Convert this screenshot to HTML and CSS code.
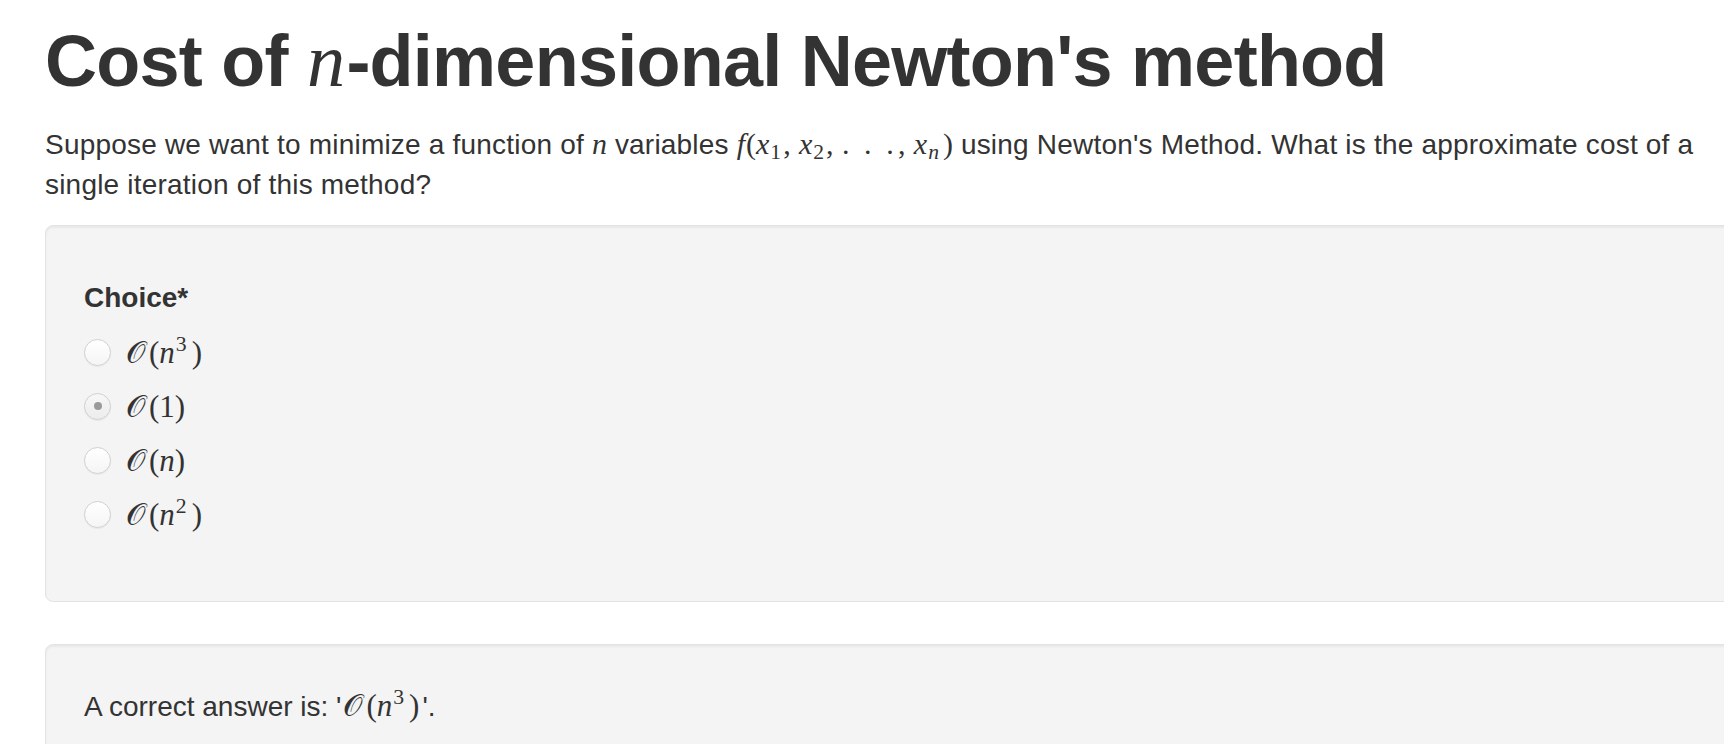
FILE: index.html
```html
<!DOCTYPE html>
<html lang="en">
<head>
<meta charset="utf-8">
<title>Cost of n-dimensional Newton's method</title>
<link rel="stylesheet" href="styles.css">
</head>
<body>
<div class="container">
  <h1 class="title">Cost of <span class="mi mi-title">n</span>-dimensional Newton's method</h1>
  <p class="question">Suppose we want to minimize a function of <span class="math"><span class="mi">n</span></span> variables <span class="math fx"><span class="mi mi-f">f</span><span class="mo">(</span><span class="mi">x</span><span class="sub">1</span><span class="punct">,</span><span class="mi">x</span><span class="sub">2</span><span class="punct">,</span><span class="dots">. . .</span><span class="punct">,</span><span class="mi">x</span><span class="sub sub-i">n</span><span class="mo mo-close">)</span></span> using Newton's Method. What is the approximate cost of a single iteration of this method?</p>

  <div class="well well-choice">
    <div class="field-label">Choice*</div>
    <div class="options">
      <div class="option"><span class="radio"></span><span class="math big"><span class="cal">𝒪</span><span class="mo">(</span><span class="mi">n</span><span class="sup">3</span><span class="mo">)</span></span></div>
      <div class="option"><span class="radio checked"><span class="dot"></span></span><span class="math big"><span class="cal">𝒪</span><span class="mo">(1)</span></span></div>
      <div class="option"><span class="radio"></span><span class="math big"><span class="cal">𝒪</span><span class="mo">(</span><span class="mi">n</span><span class="mo">)</span></span></div>
      <div class="option"><span class="radio"></span><span class="math big"><span class="cal">𝒪</span><span class="mo">(</span><span class="mi">n</span><span class="sup">2</span><span class="mo">)</span></span></div>
    </div>
  </div>

  <div class="well well-answer">
    <p class="answer">A correct answer is: '<span class="math big answer-math"><span class="cal">𝒪</span><span class="mo">(</span><span class="mi">n</span><span class="sup">3</span><span class="mo">)</span></span>'.</p>
  </div>
</div>
</body>
</html>
```

FILE: styles.css
```css
html {
  overflow-x: hidden;
}

body {
  margin: 0;
  background: #ffffff;
  color: #333333;
  font-family: "Liberation Sans", Arial, Helvetica, sans-serif;
  font-size: 28px;
  line-height: 40px;
}

.container {
  width: 1700px;
  padding-left: 45px;
}

.title {
  margin: 21px 0 23px;
  font-size: 72px;
  line-height: 80px;
  font-weight: 700;
  letter-spacing: -0.75px;
  color: #333333;
}

.question {
  margin: 0 0 20px;
  letter-spacing: 0.2px;
}

.math {
  font-family: "Liberation Serif", "DejaVu Serif", serif;
  font-size: 1.07em;
  letter-spacing: 0;
  white-space: nowrap;
}

.mi {
  font-style: italic;
  font-family: "Liberation Serif", "DejaVu Serif", serif;
}

.mi-title {
  font-weight: 400;
  font-size: 1.06em;
  padding-right: 2px;
}

.mi-f {
  margin-right: 1px;
}

.mo {
  font-style: normal;
}

.mo-close {
  margin-left: 2px;
}

.sub {
  font-size: 0.72em;
  vertical-align: -0.25em;
  line-height: 0;
  margin-left: 1px;
  margin-right: 2px;
}

.sub-i {
  font-style: italic;
}

.sup {
  font-size: 0.7em;
  vertical-align: 0.55em;
  line-height: 0;
  margin-left: 1px;
  margin-right: 5px;
}

.punct {
  margin-right: 0.28em;
}

.dots {
  letter-spacing: 0.12em;
  margin-right: 0.02em;
}

.well {
  background: #f4f4f4;
  border: 1px solid #e3e3e3;
  border-radius: 8px;
  box-shadow: inset 0 2px 2px rgba(0, 0, 0, 0.05);
}

.well-choice {
  padding: 52px 38px 60px;
  margin-bottom: 42px;
}

.field-label {
  font-weight: 700;
  margin-bottom: 7px;
}

.options {
  display: flex;
  flex-direction: column;
}

.option {
  display: flex;
  align-items: center;
  gap: 15px;
  height: 54px;
}

.radio {
  flex: none;
  display: flex;
  align-items: center;
  justify-content: center;
  box-sizing: border-box;
  width: 27px;
  height: 27px;
  border-radius: 50%;
  border: 1px solid #d0d0d0;
  background: linear-gradient(#ffffff, #f5f5f5);
  box-shadow: 0 1px 1px rgba(0, 0, 0, 0.05);
}

.radio.checked {
  background: linear-gradient(#f7f7f7, #ececec);
}

.dot {
  width: 8px;
  height: 8px;
  border-radius: 50%;
  background: #9a9a9a;
}

.big {
  font-size: 31px;
  line-height: 40px;
}

.answer-math {
  margin: 0 3px 0 2px;
}

.cal {
  font-style: normal;
  font-family: "DejaVu Serif", "Liberation Serif", serif;
  margin-right: 3px;
}

.well-answer {
  padding: 40px 38px 40px;
}

.answer {
  margin: 0;
}
```
